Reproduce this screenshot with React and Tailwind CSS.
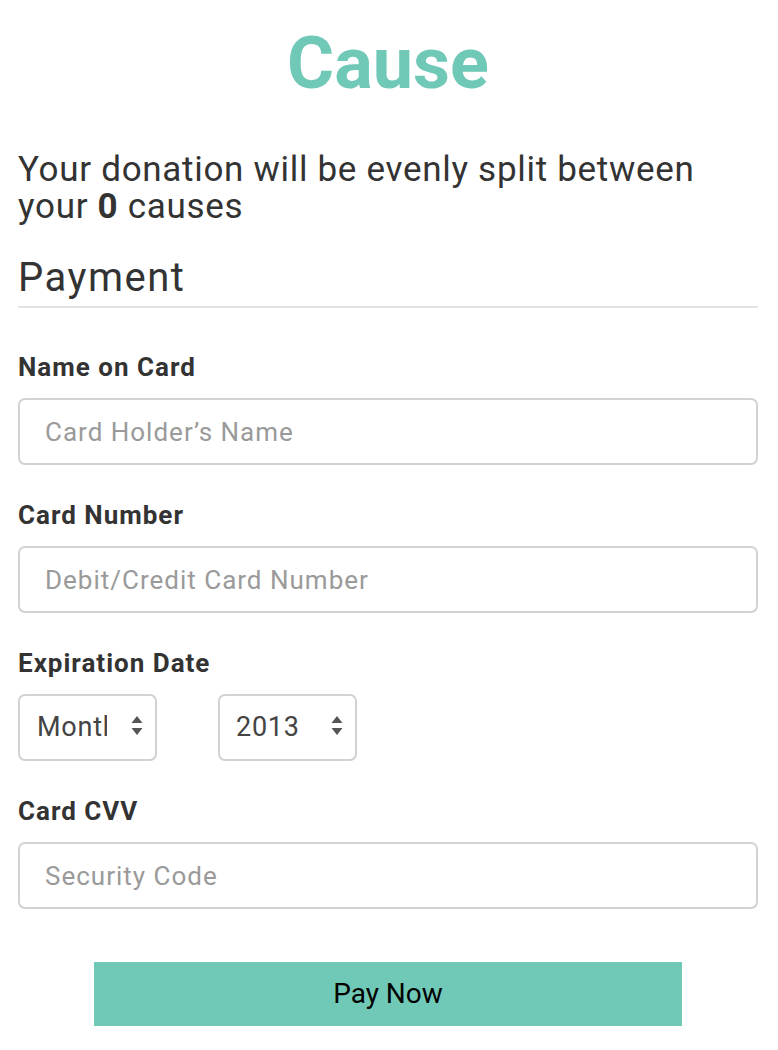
import React from "react";

const inputCls =
  "block w-full h-[67px] rounded-[7px] border-2 border-[#d2d2d2] bg-white pl-[25px] pr-4 text-[26px] tracking-[1px] text-[#333] placeholder:text-[#9a9a9a] outline-none";

const selectCls =
  "h-[67px] w-[139px] appearance-none rounded-[7px] border-2 border-[#d2d2d2] bg-white text-[27px] tracking-[0.75px] text-[#444] outline-none";

function Arrows() {
  return (
    <svg width="12" height="20" viewBox="0 0 12 20" className="pointer-events-none absolute right-[14px] top-[22px]">
      <path d="M6 0 L11.5 7 L0.5 7 Z" fill="#555" />
      <path d="M0.5 12 L11.5 12 L6 19 Z" fill="#555" />
    </svg>
  );
}

function Field({ label, placeholder, className = "" }) {
  return (
    <div className={className}>
      <label className="block text-[26px] leading-[30px] font-bold tracking-[1px] text-[#333]">{label}</label>
      <input type="text" placeholder={placeholder} className={"mt-[16px] " + inputCls} />
    </div>
  );
}

export default function App() {
  return (
    <div className="min-h-screen bg-white pl-[18px] pr-[20px] pb-8 font-['Roboto',sans-serif] text-[#333]">
      <h1 className="pt-[28px] text-center text-[72px] leading-[72px] font-bold text-[#70c9b7]">Cause</h1>

      <p className="mt-[51px] text-[35px] leading-[37px] tracking-[0.7px]">
        Your donation will be evenly split between your <b className="font-bold">0</b> causes
      </p>

      <h2 className="mt-[31px] border-b-2 border-[#e4e4e4] pb-[6px] text-[40px] leading-[44px] font-normal tracking-[1.5px]">
        Payment
      </h2>

      <form onSubmit={(e) => e.preventDefault()}>
        <Field className="mt-[44px]" label="Name on Card" placeholder="Card Holder’s Name" />
        <Field className="mt-[35px]" label="Card Number" placeholder="Debit/Credit Card Number" />

        <div className="mt-[35px]">
          <label className="block text-[26px] leading-[30px] font-bold tracking-[1px]">Expiration Date</label>
          <div className="mt-[16px] flex gap-[61px]">
            <div className="relative">
              <select className={selectCls + " pl-[17px] pr-[48px]"}>
                <option>Month</option>
              </select>
              <Arrows />
            </div>
            <div className="relative">
              <select className={selectCls + " pl-[16px] pr-[30px]"}>
                <option>2013</option>
              </select>
              <Arrows />
            </div>
          </div>
        </div>

        <Field className="mt-[35px]" label="Card CVV" placeholder="Security Code" />

        <button
          type="submit"
          className="mx-auto mt-[53px] block h-[64px] w-[588px] bg-[#70c9b7] text-[28px] text-black"
        >
          Pay Now
        </button>
      </form>
    </div>
  );
}
